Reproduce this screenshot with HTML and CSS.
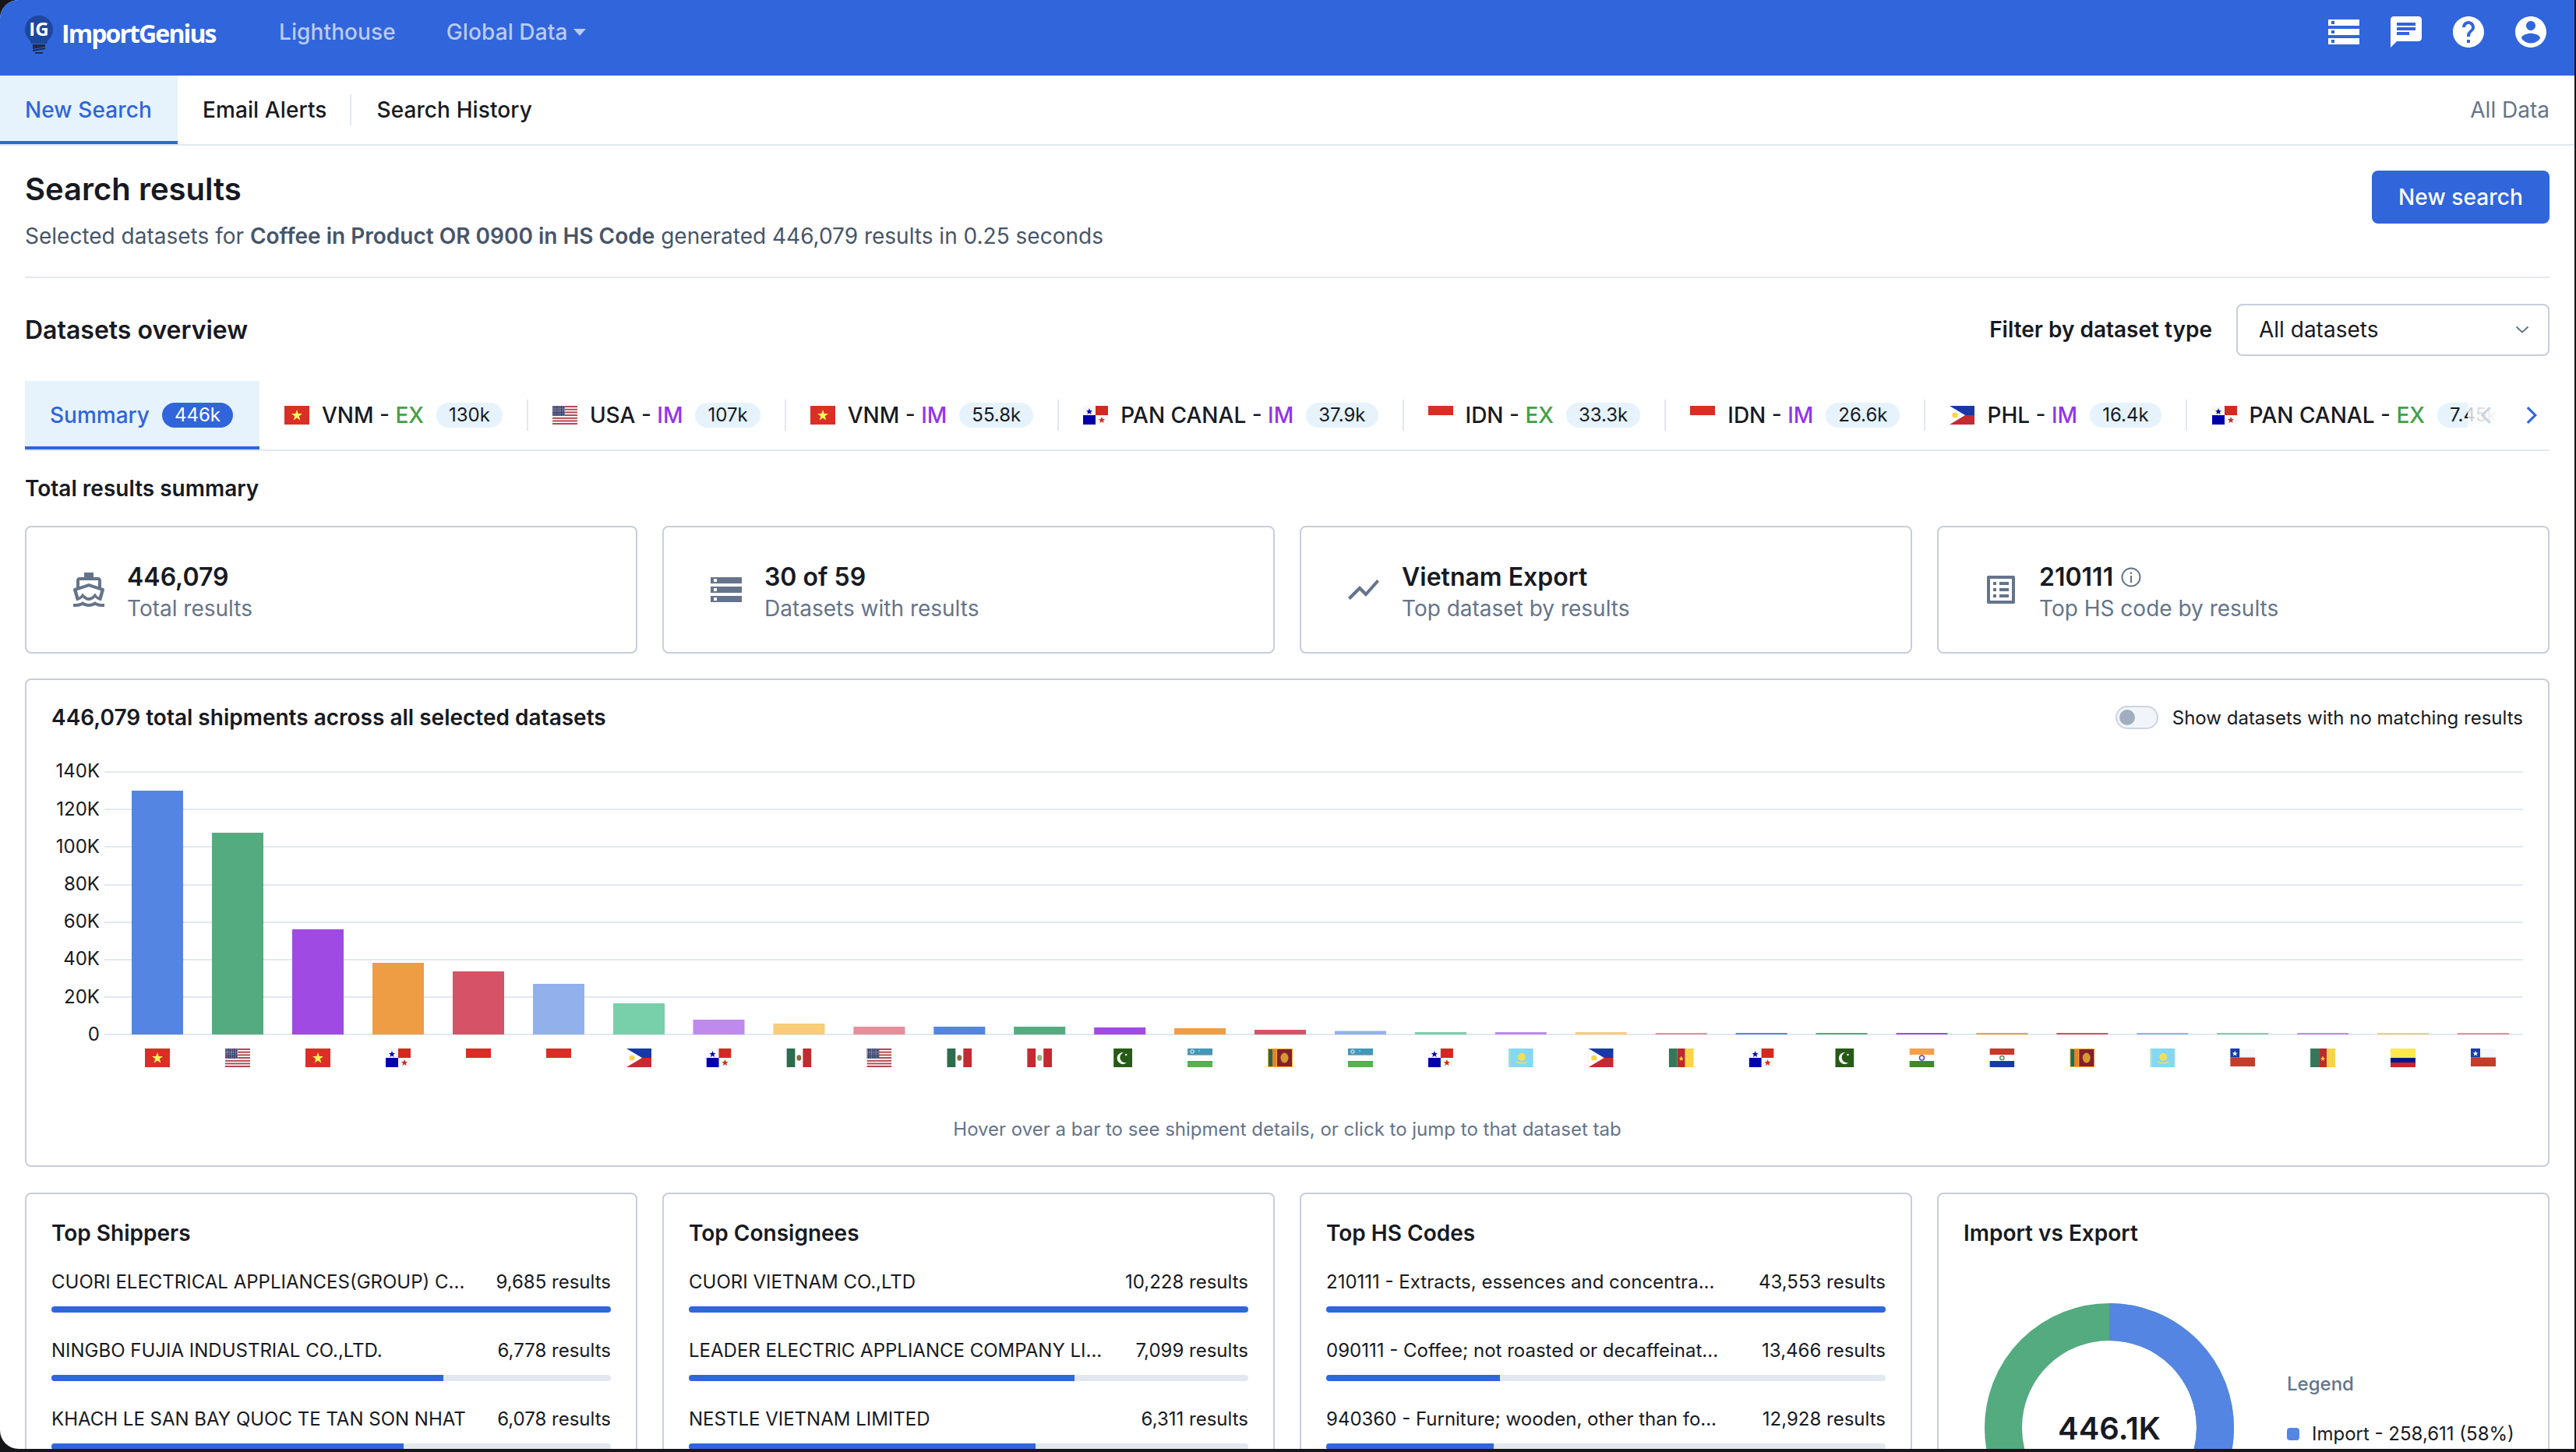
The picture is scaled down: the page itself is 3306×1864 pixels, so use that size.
FILE: index.html
```html
<!DOCTYPE html>
<html lang="en">
<head>
<meta charset="utf-8">
<title>ImportGenius - Search results</title>
<link rel="stylesheet" href="styles.css">
</head>
<body>
<svg class="defs" width="0" height="0" aria-hidden="true">
  <defs>
    <pattern id="usstars" width="2.4" height="2.2" patternUnits="userSpaceOnUse"><rect width="2.4" height="2.2" fill="#2f3566"/><circle cx="1" cy="1" r=".6" fill="#fff"/></pattern>
    <symbol id="f-vn" viewBox="0 0 32 24"><rect width="32" height="24" fill="#da2f26"/><polygon points="16,5 17.8,10 23,10 18.8,13.2 20.3,18.5 16,15.4 11.7,18.5 13.2,13.2 9,10 14.2,10" fill="#fff35a"/></symbol>
    <symbol id="f-us" viewBox="0 0 32 24"><rect width="32" height="24" fill="#fff"/><g fill="#b5484f"><rect width="32" height="2"/><rect y="3.7" width="32" height="2"/><rect y="7.4" width="32" height="2"/><rect y="11" width="32" height="2"/><rect y="14.8" width="32" height="2"/><rect y="18.4" width="32" height="2"/><rect y="22" width="32" height="2"/></g><rect width="16" height="13" fill="url(#usstars)"/></symbol>
    <symbol id="f-pa" viewBox="0 0 32 24"><rect width="32" height="24" fill="#f6f7fa"/><rect x="16" width="16" height="12" fill="#d22a20"/><rect y="12" width="16" height="12" fill="#0000a8"/><polygon points="8,3 9.2,6 12,6 9.8,8 10.6,11 8,9.2 5.4,11 6.2,8 4,6 6.8,6" fill="#0a0aa8"/><polygon points="24,14 25.2,17 28,17 25.8,19 26.6,22 24,20.2 21.4,22 22.2,19 20,17 22.8,17" fill="#d22a20"/></symbol>
    <symbol id="f-id" viewBox="0 0 32 24"><rect width="32" height="12" fill="#d72e26"/></symbol>
    <symbol id="f-ph" viewBox="0 0 32 24"><rect width="32" height="12" fill="#1739a8"/><rect y="12" width="32" height="12" fill="#c22b32"/><polygon points="0,0 20,12 0,24" fill="#fff"/><circle cx="7" cy="12" r="3.6" fill="#f8d548"/></symbol>
    <symbol id="f-mx" viewBox="0 0 32 24"><rect width="32" height="24" fill="#fff"/><rect width="11" height="24" fill="#2b6d4e"/><rect x="21" width="11" height="24" fill="#c22b32"/><ellipse cx="16" cy="12" rx="3" ry="3.8" fill="#8a6a44"/></symbol>
    <symbol id="f-pe" viewBox="0 0 32 24"><rect width="32" height="24" fill="#fff"/><rect width="11" height="24" fill="#c22b32"/><rect x="21" width="11" height="24" fill="#c22b32"/><ellipse cx="16" cy="12" rx="3.2" ry="4" fill="#8fb77a"/></symbol>
    <symbol id="f-pk" viewBox="0 0 32 24"><rect width="32" height="24" fill="#fff"/><rect x="8" width="24" height="24" fill="#255b16"/><path d="M21 5a7.5 7.5 0 1 0 4 13 6.2 6.2 0 0 1-4-13z" fill="#fff"/><circle cx="24" cy="8" r="1.2" fill="#fff"/></symbol>
    <symbol id="f-uz" viewBox="0 0 32 24"><rect width="32" height="24" fill="#fff"/><rect width="32" height="8" fill="#4199b9"/><rect y="8" width="32" height="1" fill="#e79aa5"/><rect y="16" width="32" height="1" fill="#a96a5b"/><rect y="17" width="32" height="7" fill="#56b34b"/><circle cx="6" cy="4" r="2.2" fill="none" stroke="#fff" stroke-width="1"/><circle cx="15" cy="3" r=".7" fill="#fff"/></symbol>
    <symbol id="f-lk" viewBox="0 0 32 24"><rect width="32" height="24" fill="#fbb030"/><rect x="1" y="1" width="5" height="22" fill="#1f6b55"/><rect x="6" y="1" width="5" height="22" fill="#e5802a"/><rect x="12" y="1" width="19" height="22" fill="#82202f"/><ellipse cx="21.500" cy="12" rx="5" ry="6.500" fill="#d69a2c"/></symbol>
    <symbol id="f-kz" viewBox="0 0 32 24"><rect width="32" height="24" fill="#83d8f5"/><circle cx="17" cy="11" r="5" fill="#f6dd58"/><path d="M10 17q7 4 14 0" fill="none" stroke="#f6dd58" stroke-width="1.500"/><rect x="1" width="1.500" height="24" fill="#cfe08a"/></symbol>
    <symbol id="f-cm" viewBox="0 0 32 24"><rect width="11" height="24" fill="#34785c"/><rect x="11" width="10" height="24" fill="#bd2a2e"/><rect x="21" width="11" height="24" fill="#f8d548"/><polygon points="16,9.500 17,12 19,12 17.400,13.500 18,16 16,14.500 14,16 14.600,13.500 13,12 15,12" fill="#f6cf3f"/></symbol>
    <symbol id="f-in" viewBox="0 0 32 24"><rect width="32" height="24" fill="#fff"/><rect width="32" height="8" fill="#f39f4c"/><rect y="16" width="32" height="8" fill="#3f8a23"/><circle cx="16" cy="12" r="3" fill="none" stroke="#4b4bb5" stroke-width="1.500"/></symbol>
    <symbol id="f-py" viewBox="0 0 32 24"><rect width="32" height="24" fill="#fff"/><rect width="32" height="8" fill="#c63a2a"/><rect y="16" width="32" height="8" fill="#163ba6"/><circle cx="16" cy="12" r="2.600" fill="none" stroke="#5d8a6a" stroke-width="1.500"/></symbol>
    <symbol id="f-cl" viewBox="0 0 32 24"><rect width="32" height="23" fill="#f6f7fa"/><rect y="11.500" width="32" height="11.500" fill="#c63b2a"/><rect width="12" height="11.500" fill="#173ea5"/><polygon points="6,3 7,5.500 9.500,5.500 7.500,7 8.200,9.500 6,8 3.800,9.500 4.500,7 2.500,5.500 5,5.500" fill="#fff"/></symbol>
    <symbol id="f-co" viewBox="0 0 32 24"><rect width="32" height="12" fill="#fde94e"/><rect y="12" width="32" height="6" fill="#00188c"/><rect y="18" width="32" height="6" fill="#c7262b"/></symbol>
  </defs>
</svg>

<div class="window">
  <header class="topnav">
    <div class="brand">
      <svg class="brand-bulb" width="36" height="50" viewBox="0 0 36 50">
        <path d="M18 0a18 18 0 0 1 18 18c0 7-4 11-7 15l-1 3H8l-1-3C4 29 0 25 0 18A18 18 0 0 1 18 0z" fill="#1e469c"/>
        <path d="M10 37h16v3l-16 3zM10 44l16-3v2l-16 3zM12 47h12l-2 2h-8z" fill="#1f2a44"/>
        <text class="brand-ig" x="18" y="26" text-anchor="middle">IG</text>
      </svg>
      <span class="brand-name">ImportGenius</span>
    </div>
    <a class="topnav-link">Lighthouse</a>
    <a class="topnav-link">Global Data<span class="caret"></span></a>
    <div class="topnav-icons">
      <svg class="icon48" viewBox="0 0 24 24"><path d="M2 20h20v-4H2v4zm2-3h2v2H4v-2zM2 4v4h20V4H2zm4 3H4V5h2v2zm-4 7h20v-4H2v4zm2-3h2v2H4v-2z"/></svg>
      <svg class="icon48" viewBox="0 0 24 24"><path d="M20 2H4c-1.100 0-1.990.9-1.990 2L2 22l4-4h14c1.100 0 2-.9 2-2V4c0-1.100-.9-2-2-2zM6 9h12v2H6V9zm8 5H6v-2h8v2zm4-6H6V6h12v2z"/></svg>
      <svg class="icon48" viewBox="0 0 24 24"><path d="M12 2C6.480 2 2 6.480 2 12s4.480 10 10 10 10-4.480 10-10S17.520 2 12 2zm1 17h-2v-2h2v2zm2.070-7.750l-.9.920C13.450 12.900 13 13.500 13 15h-2v-.5c0-1.100.45-2.100 1.170-2.830l1.240-1.260c.37-.36.590-.86.590-1.410 0-1.100-.9-2-2-2s-2 .9-2 2H8c0-2.210 1.790-4 4-4s4 1.790 4 4c0 .88-.36 1.680-.93 2.250z"/></svg>
      <svg class="icon48" viewBox="0 0 24 24"><path d="M12 2C6.480 2 2 6.480 2 12s4.480 10 10 10 10-4.480 10-10S17.520 2 12 2zm0 3c1.660 0 3 1.340 3 3s-1.340 3-3 3-3-1.340-3-3 1.340-3 3-3zm0 14.200c-2.500 0-4.710-1.280-6-3.220.03-1.990 4-3.080 6-3.080 1.990 0 5.970 1.090 6 3.080-1.290 1.940-3.500 3.220-6 3.220z"/></svg>
    </div>
  </header>

  <nav class="subnav">
    <a class="subnav-tab subnav-active">New Search</a>
    <a class="subnav-tab subnav-split">Email Alerts</a>
    <a class="subnav-tab">Search History</a>
    <span class="subnav-right">All Data</span>
  </nav>

  <main class="content">
    <section class="results-head">
      <div>
        <h1 class="page-title">Search results</h1>
        <p class="page-sub">Selected datasets for <strong>Coffee in Product OR 0900 in HS Code</strong> generated 446,079 results in 0.25 seconds</p>
      </div>
      <button class="btn-primary">New search</button>
    </section>

    <section class="overview-head">
      <h2 class="overview-title">Datasets overview</h2>
      <div class="filter">
        <span class="filter-label">Filter by dataset type</span>
        <div class="select">
          <span>All datasets</span>
          <svg width="18" height="10" viewBox="0 0 18 10"><path d="M1.500 1.500 9 8.500l7.500-7" fill="none" stroke="#64748b" stroke-width="2"/></svg>
        </div>
      </div>
    </section>

    <div class="tabs">
      <div class="tab tab-summary">Summary <span class="pill pill-on">446k</span></div>
      <div class="tab tab-split"><svg class="flag"><use href="#f-vn"/></svg><span>VNM - <b class="ex">EX</b></span><span class="pill">130k</span></div>
      <div class="tab tab-split"><svg class="flag"><use href="#f-us"/></svg><span>USA - <b class="im">IM</b></span><span class="pill">107k</span></div>
      <div class="tab tab-split"><svg class="flag"><use href="#f-vn"/></svg><span>VNM - <b class="im">IM</b></span><span class="pill">55.8k</span></div>
      <div class="tab tab-split"><svg class="flag"><use href="#f-pa"/></svg><span>PAN CANAL - <b class="im">IM</b></span><span class="pill">37.9k</span></div>
      <div class="tab tab-split"><svg class="flag"><use href="#f-id"/></svg><span>IDN - <b class="ex">EX</b></span><span class="pill">33.3k</span></div>
      <div class="tab tab-split"><svg class="flag"><use href="#f-id"/></svg><span>IDN - <b class="im">IM</b></span><span class="pill">26.6k</span></div>
      <div class="tab tab-split"><svg class="flag"><use href="#f-ph"/></svg><span>PHL - <b class="im">IM</b></span><span class="pill">16.4k</span></div>
      <div class="tab"><svg class="flag"><use href="#f-pa"/></svg><span>PAN CANAL - <b class="ex">EX</b></span><span class="pill">7.45k</span></div>
      <div class="tabs-edge">
        <svg width="16" height="26" viewBox="0 0 16 26"><path d="M14 2 3 13l11 11" fill="none" stroke="#cbd5e1" stroke-width="3.500"/></svg>
        <svg width="16" height="26" viewBox="0 0 16 26"><path d="M2 2l11 11L2 24" fill="none" stroke="#3065dc" stroke-width="3.500"/></svg>
      </div>
    </div>

    <h3 class="section-title">Total results summary</h3>

    <div class="four-up stats">
      <div class="stat">
        <svg class="icon48 icon-slate" viewBox="0 0 24 24"><path fill-rule="evenodd" d="M20 21c-1.390 0-2.780-.47-4-1.320-2.440 1.710-5.560 1.710-8 0C6.780 20.530 5.390 21 4 21H2v2h2c1.380 0 2.740-.35 4-.99 2.520 1.290 5.480 1.290 8 0 1.260.65 2.620.99 4 .99h2v-2h-2zM3.950 19H4c1.600 0 3.020-.88 4-2 .98 1.120 2.400 2 4 2s3.020-.88 4-2c.98 1.120 2.400 2 4 2h.05l1.890-6.680c.08-.26.06-.54-.06-.78s-.34-.42-.6-.5L20 10.620V6c0-1.100-.9-2-2-2h-3V1H9v3H6c-1.100 0-2 .9-2 2v4.620l-1.290.42c-.26.08-.48.26-.6.5s-.15.52-.06.78L3.950 19zM6 6h12v3.970L12 8 6 9.970V6zM12 10.100l7.600 2.500-1.200 4.200c-.8-.4-1.600-1.200-2.400-2.700-1 1.700-2.400 2.900-4 2.900s-3-1.200-4-2.900c-.8 1.500-1.600 2.300-2.400 2.700l-1.200-4.200z"/></svg>
        <div class="stat-text"><div class="stat-num">446,079</div><div class="stat-sub">Total results</div></div>
      </div>
      <div class="stat">
        <svg class="icon48 icon-slate" viewBox="0 0 24 24"><path d="M2 20h20v-4H2v4zm2-3h2v2H4v-2zM2 4v4h20V4H2zm4 3H4V5h2v2zm-4 7h20v-4H2v4zm2-3h2v2H4v-2z"/></svg>
        <div class="stat-text"><div class="stat-num">30 of 59</div><div class="stat-sub">Datasets with results</div></div>
      </div>
      <div class="stat">
        <svg class="icon48 icon-slate" viewBox="0 0 24 24"><path d="M3.500 18.490l6-6.010 4 4L22 6.920l-1.410-1.410-7.090 7.970-4-4L2 16.990z"/></svg>
        <div class="stat-text"><div class="stat-num">Vietnam Export</div><div class="stat-sub">Top dataset by results</div></div>
      </div>
      <div class="stat">
        <svg class="icon48 icon-slate" viewBox="0 0 24 24"><path d="M19 5v14H5V5h14m1.100-2H3.900c-.5 0-.9.4-.9.9v16.200c0 .4.4.9.9.9h16.200c.4 0 .9-.5.9-.9V3.900c0-.5-.5-.9-.9-.9zM11 7h6v2h-6V7zm0 4h6v2h-6v-2zm0 4h6v2h-6zM7 7h2v2H7zm0 4h2v2H7zm0 4h2v2H7z"/></svg>
        <div class="stat-text">
          <div class="stat-num">210111
            <svg class="icon-info" viewBox="0 0 26 26"><circle cx="13" cy="13" r="11.500" fill="none" stroke="#64748b" stroke-width="2"/><rect x="12" y="11" width="2" height="9" fill="#64748b"/><rect x="12" y="6.500" width="2" height="2.500" fill="#64748b"/></svg>
          </div>
          <div class="stat-sub">Top HS code by results</div>
        </div>
      </div>
    </div>

    <section class="chart-card">
      <div class="chart-head">
        <span class="chart-title">446,079 total shipments across all selected datasets</span>
        <div class="toggle-wrap"><span class="toggle"><span class="toggle-knob"></span></span><span>Show datasets with no matching results</span></div>
      </div>
      <svg class="chart" viewBox="34 971 3236 409" width="3236" height="409">
        <g class="grid">
          <rect x="134" y="990" width="3104" height="2"/><rect x="134" y="1038" width="3104" height="2"/><rect x="134" y="1086" width="3104" height="2"/><rect x="134" y="1135" width="3104" height="2"/><rect x="134" y="1183" width="3104" height="2"/><rect x="134" y="1231" width="3104" height="2"/><rect x="134" y="1279" width="3104" height="2"/><rect x="134" y="1327" width="3104" height="2"/>
        </g>
        <g class="ylabels" text-anchor="end">
          <text x="128" y="998">140K</text><text x="128" y="1047">120K</text><text x="128" y="1095">100K</text><text x="128" y="1143">80K</text><text x="128" y="1191">60K</text><text x="128" y="1239">40K</text><text x="128" y="1288">20K</text><text x="128" y="1336">0</text>
        </g>
        <g>
          <rect class="c1" x="169" y="1015" width="66" height="313"/>
          <rect class="c2" x="272" y="1069" width="66" height="259"/>
          <rect class="c3" x="375" y="1193" width="66" height="135"/>
          <rect class="c4" x="478" y="1236" width="66" height="92"/>
          <rect class="c5" x="581" y="1247" width="66" height="81"/>
          <rect class="c6" x="684" y="1263" width="66" height="65"/>
          <rect class="c7" x="787" y="1288" width="66" height="40"/>
          <rect class="c8" x="889.500" y="1309" width="66" height="19"/>
          <rect class="c9" x="992.400" y="1314" width="66" height="14"/>
          <rect class="c10" x="1095.400" y="1318" width="66" height="10"/>
          <rect class="c1" x="1198.300" y="1318" width="66" height="10"/>
          <rect class="c2" x="1301.200" y="1318" width="66" height="10"/>
          <rect class="c3" x="1404.200" y="1319" width="66" height="9"/>
          <rect class="c4" x="1507.100" y="1320" width="66" height="8"/>
          <rect class="c5" x="1610" y="1322" width="66" height="6"/>
          <rect class="c6" x="1713" y="1323.500" width="66" height="4.500"/>
          <rect class="c7" x="1815.900" y="1325" width="66" height="3"/>
          <rect class="c8" x="1918.800" y="1325" width="66" height="3"/>
          <rect class="c9" x="2021.700" y="1325" width="66" height="3"/>
          <rect class="c10" x="2124.700" y="1326" width="66" height="2"/>
          <rect class="c1" x="2227.600" y="1326" width="66" height="2"/>
          <rect class="c2" x="2330.500" y="1326" width="66" height="2"/>
          <rect class="c3" x="2433.500" y="1326" width="66" height="2"/>
          <rect class="c4" x="2536.400" y="1326" width="66" height="2"/>
          <rect class="c5" x="2639.300" y="1326" width="66" height="2"/>
          <rect class="c6" x="2742.300" y="1326" width="66" height="2"/>
          <rect class="c7" x="2845.200" y="1326" width="66" height="2"/>
          <rect class="c8" x="2948.100" y="1326" width="66" height="2"/>
          <rect class="c9" x="3051" y="1326" width="66" height="2"/>
          <rect class="c10" x="3154" y="1326" width="66" height="2"/>
        </g>
        <g>
          <use href="#f-vn" x="186" y="1346" width="32" height="24"/>
          <use href="#f-us" x="289" y="1346" width="32" height="24"/>
          <use href="#f-vn" x="392" y="1346" width="32" height="24"/>
          <use href="#f-pa" x="495" y="1346" width="32" height="24"/>
          <use href="#f-id" x="598" y="1346" width="32" height="24"/>
          <use href="#f-id" x="701" y="1346" width="32" height="24"/>
          <use href="#f-ph" x="804" y="1346" width="32" height="24"/>
          <use href="#f-pa" x="906.500" y="1346" width="32" height="24"/>
          <use href="#f-mx" x="1009.400" y="1346" width="32" height="24"/>
          <use href="#f-us" x="1112.400" y="1346" width="32" height="24"/>
          <use href="#f-mx" x="1215.300" y="1346" width="32" height="24"/>
          <use href="#f-pe" x="1318.200" y="1346" width="32" height="24"/>
          <use href="#f-pk" x="1421.200" y="1346" width="32" height="24"/>
          <use href="#f-uz" x="1524.100" y="1346" width="32" height="24"/>
          <use href="#f-lk" x="1627" y="1346" width="32" height="24"/>
          <use href="#f-uz" x="1730" y="1346" width="32" height="24"/>
          <use href="#f-pa" x="1832.900" y="1346" width="32" height="24"/>
          <use href="#f-kz" x="1935.800" y="1346" width="32" height="24"/>
          <use href="#f-ph" x="2038.700" y="1346" width="32" height="24"/>
          <use href="#f-cm" x="2141.700" y="1346" width="32" height="24"/>
          <use href="#f-pa" x="2244.600" y="1346" width="32" height="24"/>
          <use href="#f-pk" x="2347.500" y="1346" width="32" height="24"/>
          <use href="#f-in" x="2450.500" y="1346" width="32" height="24"/>
          <use href="#f-py" x="2553.400" y="1346" width="32" height="24"/>
          <use href="#f-lk" x="2656.300" y="1346" width="32" height="24"/>
          <use href="#f-kz" x="2759.300" y="1346" width="32" height="24"/>
          <use href="#f-cl" x="2862.200" y="1346" width="32" height="24"/>
          <use href="#f-cm" x="2965.100" y="1346" width="32" height="24"/>
          <use href="#f-co" x="3068" y="1346" width="32" height="24"/>
          <use href="#f-cl" x="3171" y="1346" width="32" height="24"/>
        </g>
      </svg>
      <p class="chart-note">Hover over a bar to see shipment details, or click to jump to that dataset tab</p>
    </section>

    <div class="four-up lower">
      <section class="top-card">
        <h4 class="card-title">Top Shippers</h4>
        <div class="row"><div class="row-text"><span>CUORI ELECTRICAL APPLIANCES(GROUP) C...</span><span>9,685 results</span></div><div class="track"><div class="fill" style="width:100%"></div></div></div>
        <div class="row"><div class="row-text"><span>NINGBO FUJIA INDUSTRIAL CO.,LTD.</span><span>6,778 results</span></div><div class="track"><div class="fill" style="width:70%"></div></div></div>
        <div class="row"><div class="row-text"><span>KHACH LE SAN BAY QUOC TE TAN SON NHAT</span><span>6,078 results</span></div><div class="track"><div class="fill" style="width:63%"></div></div></div>
      </section>
      <section class="top-card">
        <h4 class="card-title">Top Consignees</h4>
        <div class="row"><div class="row-text"><span>CUORI VIETNAM CO.,LTD</span><span>10,228 results</span></div><div class="track"><div class="fill" style="width:100%"></div></div></div>
        <div class="row"><div class="row-text"><span>LEADER ELECTRIC APPLIANCE COMPANY LI...</span><span>7,099 results</span></div><div class="track"><div class="fill" style="width:69%"></div></div></div>
        <div class="row"><div class="row-text"><span>NESTLE VIETNAM LIMITED</span><span>6,311 results</span></div><div class="track"><div class="fill" style="width:62%"></div></div></div>
      </section>
      <section class="top-card">
        <h4 class="card-title">Top HS Codes</h4>
        <div class="row"><div class="row-text"><span>210111 - Extracts, essences and concentra...</span><span>43,553 results</span></div><div class="track"><div class="fill" style="width:100%"></div></div></div>
        <div class="row"><div class="row-text"><span>090111 - Coffee; not roasted or decaffeinat...</span><span>13,466 results</span></div><div class="track"><div class="fill" style="width:31%"></div></div></div>
        <div class="row"><div class="row-text"><span>940360 - Furniture; wooden, other than fo...</span><span>12,928 results</span></div><div class="track"><div class="fill" style="width:30%"></div></div></div>
      </section>
      <section class="top-card">
        <h4 class="card-title">Import vs Export</h4>
        <div class="donut-wrap">
          <svg class="donut" width="320" height="320" viewBox="0 0 320 320">
            <circle cx="160" cy="160" r="136" fill="none" stroke="#54ab80" stroke-width="48"/>
            <circle cx="160" cy="160" r="136" fill="none" stroke="#5585e3" stroke-width="48" stroke-dasharray="495.6 854.5" transform="rotate(-90 160 160)"/>
            <text class="donut-num" x="160" y="175" text-anchor="middle">446.1K</text>
          </svg>
          <div class="legend">
            <div class="legend-title">Legend</div>
            <div class="legend-row"><span class="legend-dot"></span><span>Import - 258,611 (58%)</span></div>
          </div>
        </div>
      </section>
    </div>
  </main>
</div>
</body>
</html>
```

FILE: styles.css
```css
* { box-sizing: border-box; }
html, body { margin: 0; padding: 0; background: #16161a; }
body { width: 3306px; height: 1864px; overflow: hidden; font-family: Inter, "Liberation Sans", sans-serif; color: #171a23; }
.defs { position: absolute; }
.window { width: 3304px; height: 1860px; overflow: hidden; background: #fff; border-radius: 24px 0 0 24px; }

.topnav { height: 97px; background: #3065dc; display: flex; align-items: center; padding: 0 32px 15px; }
.brand { display: flex; align-items: center; width: 326px; }
.brand-bulb { margin-top: 8px; margin-right: 11px; flex: none; }
.brand-ig { font: 700 24px "Open Sans", sans-serif; fill: #fff; }
.brand-name { font: 700 32px "Open Sans", sans-serif; color: #fff; letter-spacing: -1.9px; margin-top: 2px; }
.topnav-link { font-size: 28px; font-weight: 500; letter-spacing: .1px; color: #bccbf3; margin-right: 65px; display: flex; align-items: center; }
.caret { width: 0; height: 0; border-left: 8px solid transparent; border-right: 8px solid transparent; border-top: 9px solid #bccbf3; margin-left: 8px; }
.topnav-icons { margin-left: auto; display: flex; gap: 32px; }
.icon48 { width: 48px; height: 48px; fill: #fff; flex: none; display: block; }
.icon-slate { fill: #64748b; }

.subnav { height: 90px; border-bottom: 2px solid #e2e8f0; display: flex; align-items: stretch; padding-right: 32px; }
.subnav-tab { font-size: 28px; font-weight: 500; letter-spacing: .1px; white-space: nowrap; display: flex; align-items: center; padding: 0 32px; position: relative; }
.subnav-active { color: #3065dc; background: #e6f3fc; width: 228px; box-shadow: inset 0 -4px 0 #3065dc; }
.subnav-split::after { content: ""; position: absolute; right: 0; top: 24px; height: 40px; width: 2px; background: #e2e8f0; }
.subnav-right { margin-left: auto; align-self: center; font-size: 28px; color: #64748b; }

.content { padding: 0 32px; }
.results-head { display: flex; justify-content: space-between; align-items: flex-start; height: 170px; border-bottom: 2px solid #e2e8f0; padding-top: 32px; }
.page-title { margin: 0; font-size: 40px; font-weight: 600; line-height: 48px; }
.page-sub { margin: 16px 0 0; font-size: 28px; line-height: 40px; color: #475569; }
.page-sub strong { font-weight: 600; }
.btn-primary { width: 228px; height: 68px; border: 0; border-radius: 8px; background: #3065dc; color: #fff; font: 500 28px Inter, sans-serif; letter-spacing: .1px; }

.overview-head { display: flex; justify-content: space-between; align-items: center; height: 132px; }
.overview-title { margin: 0; font-size: 32px; font-weight: 600; }
.filter { display: flex; align-items: center; gap: 31px; }
.filter-label { font-size: 28px; font-weight: 600; }
.select { width: 402px; height: 67px; border: 2px solid #c7cedb; border-radius: 8px; display: flex; align-items: center; justify-content: space-between; padding: 0 24px 0 27px; font-size: 28px; }

.tabs { position: relative; display: flex; height: 90px; border-bottom: 2px solid #e2e8f0; overflow: hidden; white-space: nowrap; }
.tab { flex: none; display: flex; align-items: center; gap: 16px; padding: 0 32px; height: 88px; font-size: 28px; font-weight: 500; }
.tab-split { position: relative; padding-left: 31px; padding-right: 33px; }
.tab-split::after { content: ""; position: absolute; right: 0; top: 24px; height: 40px; width: 2px; background: #e2e8f0; }
.tab-summary { color: #3065dc; background: #e6f3fc; box-shadow: inset 0 -4px 0 #3065dc; width: 301px; margin-right: 1px; }
.tab b { font-weight: 500; }
.ex { color: #43a047; }
.im { color: #9333ea; }
.flag { width: 32px; height: 24px; flex: none; }
.pill { background: #e6f3fc; border-radius: 16px; height: 32px; line-height: 32px; padding: 0 16px; font-size: 24px; font-weight: 400; color: #171a23; }
.pill-on { background: #3065dc; color: #fff; }
.tabs-edge { position: absolute; right: 0; top: 0; bottom: 0; width: 105px; display: flex; align-items: center; padding: 0 16px; gap: 44px; background: linear-gradient(to right, rgba(255,255,255,.75), #fff 38%); }

.section-title { margin: 0; font-size: 28px; font-weight: 600; line-height: 36px; padding-top: 30px; }
.four-up { display: grid; grid-template-columns: repeat(4, 786px); gap: 32px; }
.stats { margin-top: 30px; }
.stat { height: 164px; border: 2px solid #c7cedb; border-radius: 8px; display: flex; align-items: center; gap: 25px; padding-left: 56px; }
.stat-text { margin-top: 8px; }
.stat-num { font-size: 32px; font-weight: 600; line-height: 40px; display: flex; align-items: center; gap: 10px; }
.stat-sub { font-size: 28px; line-height: 40px; color: #64748b; }
.icon-info { width: 26px; height: 26px; }

.chart-card { height: 627px; margin-top: 32px; border: 2px solid #c7cedb; border-radius: 8px; padding: 30px 32px 0 0; }
.chart-head { display: flex; justify-content: space-between; align-items: center; height: 36px; margin-left: 32px; }
.chart-title { font-size: 28px; font-weight: 600; }
.toggle-wrap { display: flex; align-items: center; gap: 18px; font-size: 24px; font-weight: 400; }
.toggle { width: 55px; height: 30px; border-radius: 15px; background: #f1f5f9; display: flex; align-items: center; padding: 0 3px; border: 2px solid #cbd5e1; }
.toggle-knob { width: 20px; height: 20px; border-radius: 50%; background: #a0aec0; }
.chart { display: block; margin-top: 32px; }
.grid rect { fill: #e2e8f0; }
.ylabels text { font-size: 24px; fill: #171a23; }
.c1 { fill: #5585e3; } .c2 { fill: #54ab80; } .c3 { fill: #9f4ae2; } .c4 { fill: #ef9d44; } .c5 { fill: #d65266; }
.c6 { fill: #92b1ec; } .c7 { fill: #78d0aa; } .c8 { fill: #be8aee; } .c9 { fill: #f7cd78; } .c10 { fill: #e58f9c; }
.chart-note { margin: 52px 0 0 32px; text-align: center; font-size: 24px; line-height: 36px; color: #64748b; }

.lower { margin-top: 33px; }
.top-card { height: 500px; border: 2px solid #c7cedb; border-radius: 8px; padding: 32px 32px 0; }
.card-title { margin: 0 0 27px; font-size: 28px; font-weight: 600; line-height: 36px; }
.row { margin-bottom: 31px; }
.row-text { display: flex; justify-content: space-between; gap: 24px; font-size: 24px; line-height: 36px; white-space: nowrap; margin-bottom: 13px; }
.track { height: 8px; border-radius: 4px; background: #e2e8f0; overflow: hidden; }
.fill { height: 100%; background: #3065dc; }
.donut-wrap { display: flex; margin: 72px 0 0 27px; gap: 68px; align-items: flex-start; }
.donut { flex: none; }
.donut-num { font-size: 40px; font-weight: 600; fill: #171a23; font-family: Inter, sans-serif; }
.legend { padding-top: 86px; white-space: nowrap; }
.legend-title { font-size: 24px; font-weight: 500; line-height: 36px; color: #64748b; margin-bottom: 28px; }
.legend-row { display: flex; align-items: center; gap: 16px; font-size: 24px; line-height: 36px; }
.legend-dot { width: 16px; height: 16px; border-radius: 4px; background: #5585e3; }
```
